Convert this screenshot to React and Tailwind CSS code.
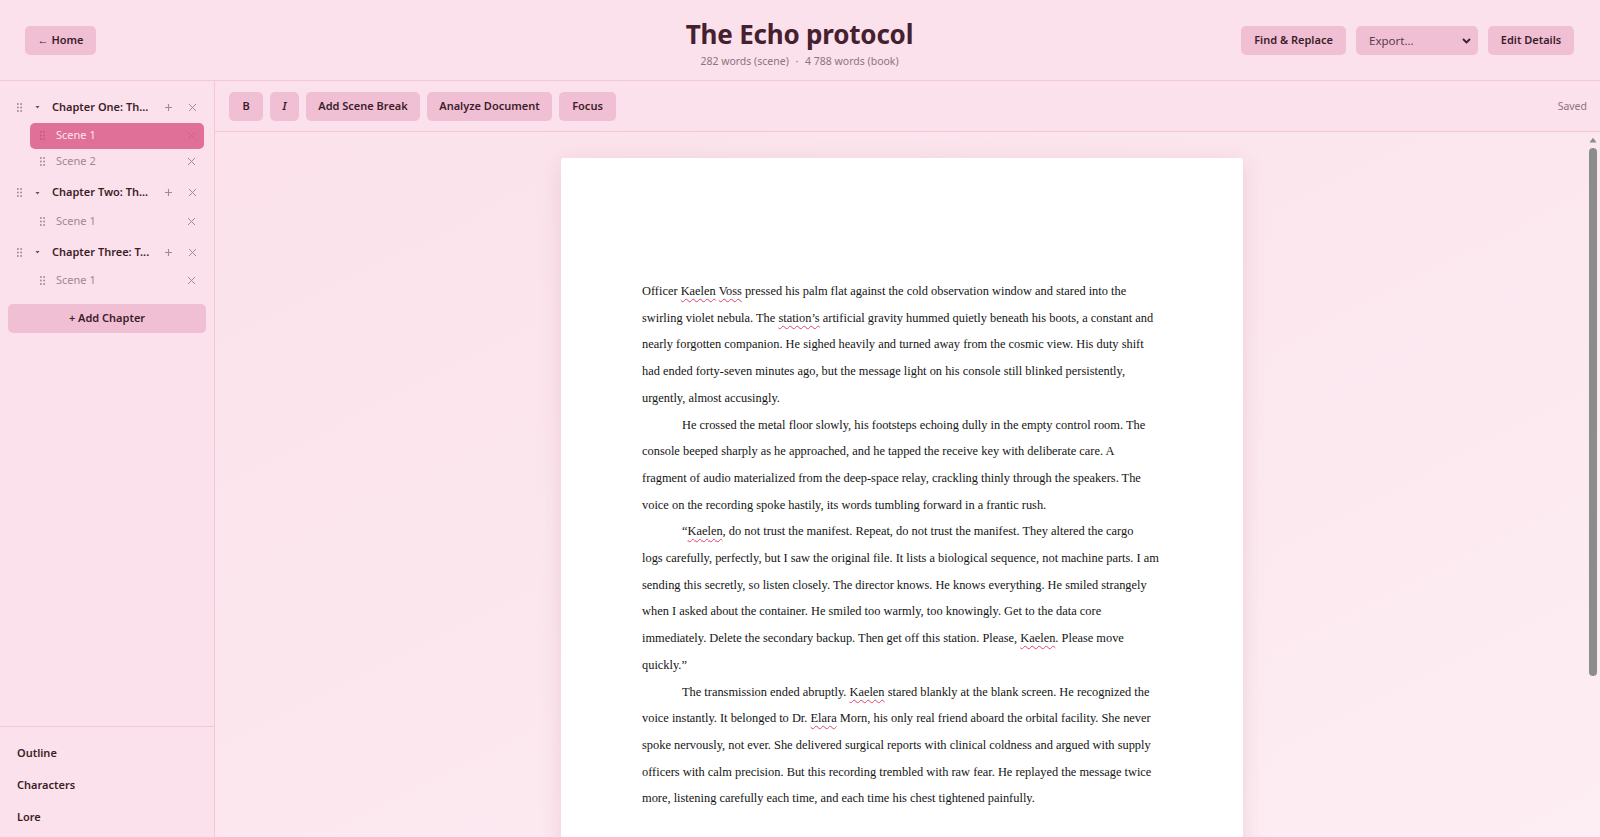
import React from "react";

const Grip = ({ className = "" }) => (
  <svg width="5" height="9" viewBox="0 0 5 9" className={className}>
    {[0.9, 4.1].map((x) =>
      [1, 4.5, 8].map((y) => <circle key={x + "-" + y} cx={x} cy={y} r="0.9" fill="currentColor" />)
    )}
  </svg>
);

const Caret = () => (
  <svg width="5" height="4" viewBox="0 0 5 4" className="text-[#6b4a58]">
    <path d="M0.5 1 L4.5 1 L2.5 3.5 Z" fill="currentColor" />
  </svg>
);

const PlusIcon = () => (
  <svg width="9" height="9" viewBox="0 0 9 9" className="text-[#a48894]">
    <path d="M4.5 1 V8 M1 4.5 H8" stroke="currentColor" strokeWidth="1.1" />
  </svg>
);

const XIcon = ({ className = "text-[#a48894]" }) => (
  <svg width="9" height="9" viewBox="0 0 9 9" className={className}>
    <path d="M1 1 L8 8 M8 1 L1 8" stroke="currentColor" strokeWidth="1" />
  </svg>
);

const Sq = ({ children }) => (
  <span className="underline decoration-wavy decoration-[#dc4470] decoration-[1.2px] underline-offset-[3px]">
    {children}
  </span>
);

function ChapterRow({ title }) {
  return (
    <div className="flex h-[26px] items-center pl-[17px] pr-[17px]">
      <Grip className="text-[#9b8590]" />
      <span className="ml-[13px] flex w-[5px] justify-center">
        <Caret />
      </span>
      <span className="ml-[12px] flex-1 text-[11px] font-semibold text-[#3b1d2a]">{title}</span>
      <span className="mr-[15px]">
        <PlusIcon />
      </span>
      <XIcon />
    </div>
  );
}

function SceneRow({ name, active, first }) {
  return (
    <div
      className={
        "ml-[30px] mr-[10px] flex h-[26px] items-center rounded-[5px] pl-[10px] pr-[8px] " +
        (first ? "mt-[2.5px] " : "") +
        (active ? "bg-[#e07098]" : "")
      }
    >
      <Grip className={active ? "text-[#c2577f]" : "text-[#9b8590]"} />
      <span
        className={"ml-[11px] flex-1 text-[11px] " + (active ? "text-[#fde6ee]" : "text-[#a48592]")}
      >
        {name}
      </span>
      <XIcon className={active ? "text-[#c9678b]" : "text-[#a48894]"} />
    </div>
  );
}

const btn =
  "flex h-[29px] items-center justify-center rounded-[5px] bg-[#f1bfd3] text-[11px] font-semibold text-[#3b1d2a]";

export default function App() {
  return (
    <div className="flex h-[837px] w-[1600px] flex-col overflow-hidden bg-[#fbe1eb] font-['Noto_Sans',sans-serif] text-[#3b1d2a]">
      {/* Header */}
      <header className="grid h-[81px] shrink-0 grid-cols-[1fr_auto_1fr] items-center border-b border-[#f4c7d7] pl-[25px] pr-[26px]">
        <div className="flex pt-[1px]">
          <button className={btn + " w-[71px]"}>← Home</button>
        </div>
        <div className="flex flex-col items-center pt-[8px]">
          <h1 className="text-[26px] font-bold leading-[32px] tracking-[-0.2px] text-[#45202f]">
            The Echo protocol
          </h1>
          <div className="mt-[4px] text-[10.5px] text-[#8f7280]">
            282 words (scene) <span className="mx-[4px]">·</span> 4 788 words (book)
          </div>
        </div>
        <div className="flex justify-end gap-[10px] pt-[1px]">
          <button className={btn + " w-[105px]"}>Find &amp; Replace</button>
          <div className="flex h-[29px] w-[122px] items-center justify-between rounded-[5px] bg-[#f1bfd3] pl-[13px] pr-[7px] text-[11.5px] text-[#5a3e4a]">
            <span>Export...</span>
            <svg width="9" height="6" viewBox="0 0 9 6">
              <path d="M1 1 L4.5 4.5 L8 1" stroke="#3b1d2a" strokeWidth="1.8" fill="none" />
            </svg>
          </div>
          <button className={btn + " w-[86px]"}>Edit Details</button>
        </div>
      </header>

      <div className="flex min-h-0 flex-1">
        {/* Sidebar */}
        <aside className="flex w-[215px] shrink-0 flex-col border-r border-[#f4c7d7]">
          <div className="flex-1 pt-[13px]">
            <ChapterRow title="Chapter One: Th..." />
            <SceneRow name="Scene 1" active first />
            <SceneRow name="Scene 2" />
            <div className="mt-[5px]">
              <ChapterRow title="Chapter Two: Th..." />
              <SceneRow name="Scene 1" first />
            </div>
            <div className="mt-[5px]">
              <ChapterRow title="Chapter Three: T..." />
              <SceneRow name="Scene 1" first />
            </div>
            <div className="mx-[8px] mt-[10px]">
              <button className={btn + " w-full"}>+ Add Chapter</button>
            </div>
          </div>
          <nav className="flex h-[111px] flex-col border-t border-[#f4c7d7] pl-[17px] pt-[10px] text-[11px] font-semibold text-[#3b1d2a]">
            <div className="flex h-[32px] items-center">Outline</div>
            <div className="flex h-[32px] items-center">Characters</div>
            <div className="flex h-[32px] items-center">Lore</div>
          </nav>
        </aside>

        {/* Main */}
        <main className="flex min-w-0 flex-1 flex-col">
          <div className="flex h-[51px] shrink-0 items-center border-b border-[#f4c7d7] pl-[14px] pr-[13px] pt-[1px]">
            <div className="flex gap-[7px]">
              <button className={btn + " w-[34px]"}>B</button>
              <button className={btn + " w-[29px] italic"}>I</button>
              <button className={btn + " w-[114px]"}>Add Scene Break</button>
              <button className={btn + " w-[125px]"}>Analyze Document</button>
              <button className={btn + " w-[57px]"}>Focus</button>
            </div>
            <div className="ml-auto text-[10.5px] text-[#8f7280]">Saved</div>
          </div>

          <div className="flex min-h-0 flex-1 bg-linear-to-br from-[#fbe2eb] via-[#fce7ef] to-[#fdeef3]">
            <div className="min-w-0 flex-1 overflow-hidden">
              <div className="flex justify-center pb-[26px] pl-[4px] pt-[26px]">
                <div className="h-[860px] w-[682px] shrink-0 rounded-[3px] bg-white pl-[81px] pt-[120px] shadow-[0_4px_22px_rgba(170,90,120,0.18)]">
                  <div className="w-[540px] whitespace-nowrap font-['Liberation_Serif',serif] text-[12.4px] leading-[26.7px] text-[#141414]">
                    <p>
                      Officer <Sq>Kaelen</Sq> <Sq>Voss</Sq> pressed his palm flat against the cold observation window and stared into the
                      <br />
                      swirling violet nebula. The <Sq>station’s</Sq> artificial gravity hummed quietly beneath his boots, a constant and
                      <br />
                      nearly forgotten companion. He sighed heavily and turned away from the cosmic view. His duty shift
                      <br />
                      had ended forty-seven minutes ago, but the message light on his console still blinked persistently,
                      <br />
                      urgently, almost accusingly.
                    </p>
                    <p className="indent-[40px]">
                      He crossed the metal floor slowly, his footsteps echoing dully in the empty control room. The
                      <br />
                      console beeped sharply as he approached, and he tapped the receive key with deliberate care. A
                      <br />
                      fragment of audio materialized from the deep-space relay, crackling thinly through the speakers. The
                      <br />
                      voice on the recording spoke hastily, its words tumbling forward in a frantic rush.
                    </p>
                    <p className="indent-[40px]">
                      “<Sq>Kaelen</Sq>, do not trust the manifest. Repeat, do not trust the manifest. They altered the cargo
                      <br />
                      logs carefully, perfectly, but I saw the original file. It lists a biological sequence, not machine parts. I am
                      <br />
                      sending this secretly, so listen closely. The director knows. He knows everything. He smiled strangely
                      <br />
                      when I asked about the container. He smiled too warmly, too knowingly. Get to the data core
                      <br />
                      immediately. Delete the secondary backup. Then get off this station. Please, <Sq>Kaelen</Sq>. Please move
                      <br />
                      quickly.”
                    </p>
                    <p className="indent-[40px]">
                      The transmission ended abruptly. <Sq>Kaelen</Sq> stared blankly at the blank screen. He recognized the
                      <br />
                      voice instantly. It belonged to Dr. <Sq>Elara</Sq> Morn, his only real friend aboard the orbital facility. She never
                      <br />
                      spoke nervously, not ever. She delivered surgical reports with clinical coldness and argued with supply
                      <br />
                      officers with calm precision. But this recording trembled with raw fear. He replayed the message twice
                      <br />
                      more, listening carefully each time, and each time his chest tightened painfully.
                    </p>
                  </div>
                </div>
              </div>
            </div>
            {/* scrollbar */}
            <div className="flex w-[15px] shrink-0 flex-col items-center pt-[5px]">
              <svg width="8" height="6" viewBox="0 0 8 6">
                <path d="M0.5 5.5 L4 0.8 L7.5 5.5 Z" fill="#8c8c8c" />
              </svg>
              <div className="mt-[5px] h-[528px] w-[8px] rounded-full bg-[#8c8c8c]" />
            </div>
          </div>
        </main>
      </div>
    </div>
  );
}
